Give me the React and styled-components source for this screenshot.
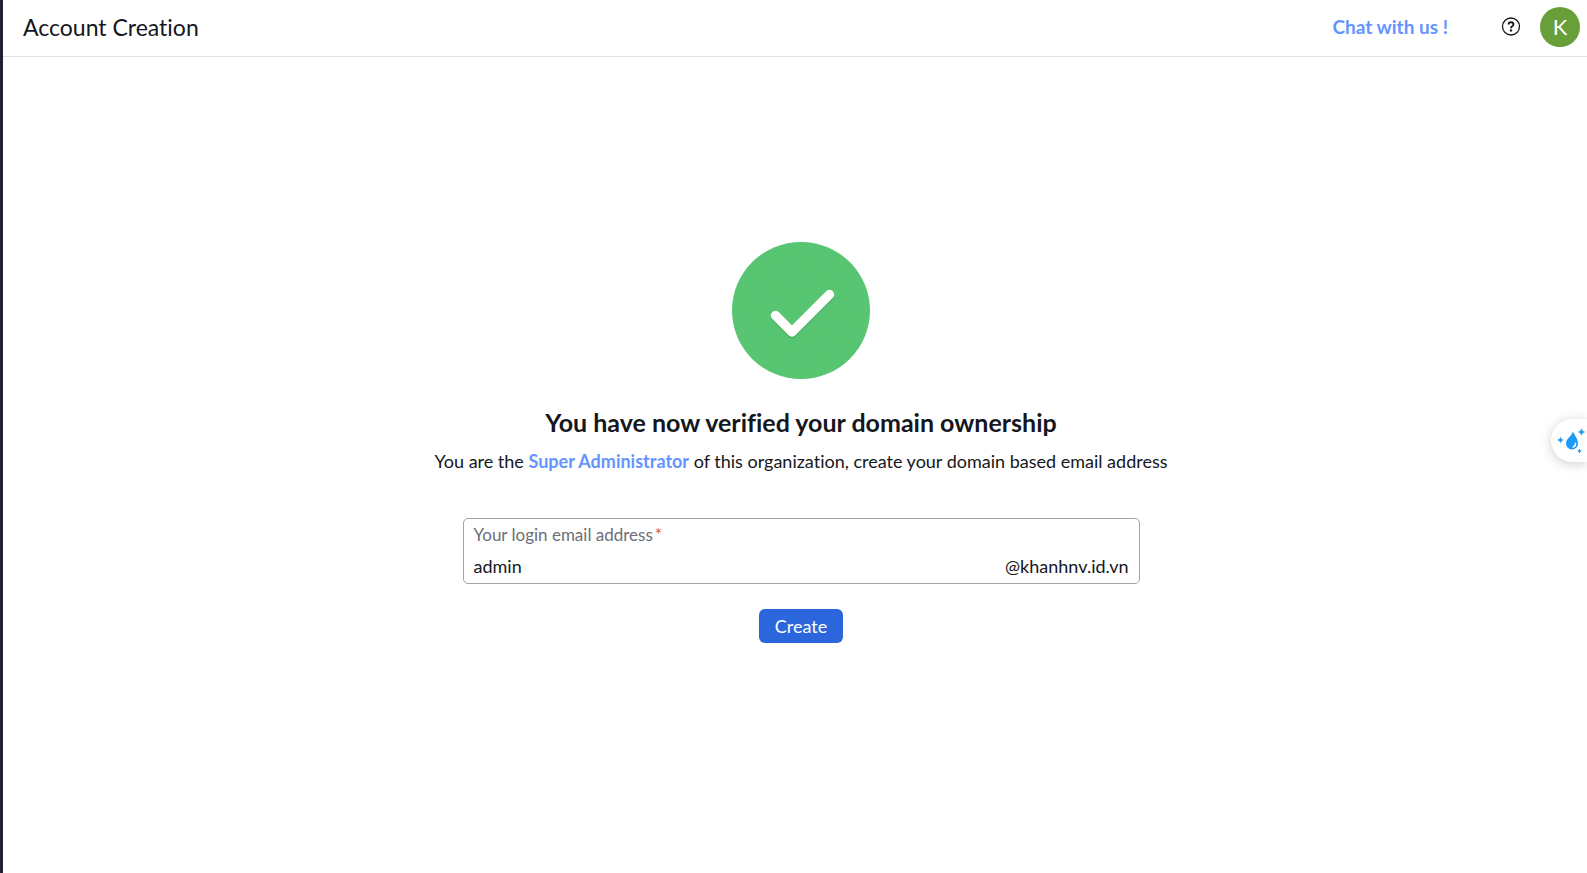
import React, { useState } from 'react';

import styled, { createGlobalStyle } from 'styled-components';

const GlobalStyle = createGlobalStyle`
  * {
    box-sizing: border-box;
  }

  body {
    margin: 0;
    background: #fff;
    color: #15171c;
    font-family: Lato, "Open Sans", sans-serif;
    font-size: 18px;
    font-variant-ligatures: none;
    line-height: 24px;
  }

  button,
  input {
    font: inherit;
  }
`;

const Page = styled.div`
  min-height: 100vh;
  display: flex;
  flex-direction: column;
  border-left: 3px solid #1d2130;
`;

const Header = styled.header`
  height: 57px;
  display: flex;
  align-items: center;
  padding: 0 7px 3px 20px;
  border-bottom: 1px solid #e2e2e4;
`;

const PageTitle = styled.h1`
  flex: 1;
  margin: 0;
  font-size: 23px;
  font-weight: 400;
`;

const BlueLink = styled.a`
  color: #6494ff;
  font-size: ${({ $size }) => $size || '18px'};
  font-weight: 700;
  text-decoration: none;
`;

const IconButton = styled.button`
  display: flex;
  margin: 0 19px 0 53px;
  padding: 0;
  border: 0;
  background: none;
  color: #15171c;
  cursor: pointer;
`;

const Avatar = styled.button`
  width: 40px;
  height: 40px;
  padding: 0;
  border: 0;
  border-radius: 50%;
  background: #689f38;
  color: #fff;
  font-size: 22px;
  cursor: pointer;
`;

const Main = styled.main`
  flex: 1;
  display: flex;
  flex-direction: column;
  align-items: center;
  padding: 185px 0 40px 12px;
`;

const Heading = styled.h2`
  margin: 27px 0 0;
  font-size: 25px;
  font-weight: 700;
  line-height: 32px;
`;

const Description = styled.p`
  margin: 11px 0 0;
`;

const Form = styled.form`
  width: 100%;
  display: flex;
  flex-direction: column;
  align-items: center;
  gap: 25px;
  margin-top: 45px;
`;

const Field = styled.div`
  width: 100%;
  max-width: 677px;
  padding: 4px 10px 5px;
  border: 1px solid #a0a3ab;
  border-radius: 5px;
`;

const FieldLabel = styled.label`
  display: block;
  color: #6b6f78;
  font-size: 17px;
`;

const Required = styled.span`
  margin-left: 2px;
  color: #d0602a;
`;

const FieldRow = styled.div`
  display: flex;
  align-items: center;
  margin-top: 7px;
`;

const EmailInput = styled.input`
  flex: 1;
  min-width: 0;
  height: 24px;
  padding: 0;
  border: 0;
  outline: 0;
  background: none;
  color: #15171c;
`;

const CreateButton = styled.button`
  height: 34px;
  padding: 0 16px;
  border: 0;
  border-radius: 6px;
  background: #2c66dd;
  color: #fff;
  cursor: pointer;
`;

const FloatingWidget = styled.button`
  position: fixed;
  top: 419px;
  right: 0;
  width: 36px;
  height: 43px;
  display: flex;
  align-items: center;
  padding: 0 0 0 6px;
  border: 0;
  border-radius: 22px 0 0 22px;
  background: #fff;
  box-shadow: 0 2px 12px rgba(0, 0, 0, 0.2);
  cursor: pointer;
`;

const HelpIcon = () => (
  <svg width="20" height="20" viewBox="0 0 20 20" fill="none" stroke="currentColor" aria-hidden="true">
    <circle cx="10" cy="9.5" r="8.5" strokeWidth="1.3" />
    <path d="M7.6 7.6C7.6 6.1 8.600 5.300 10 5.300C11.400 5.300 12.400 6.100 12.400 7.400C12.400 9.100 10 9.200 10 11.200" strokeWidth="1.9" />
    <circle cx="10" cy="13.400" r="1.200" fill="currentColor" stroke="none" />
  </svg>
);

const SuccessIcon = () => (
  <svg width="138" height="137" viewBox="0 0 138 137" fill="none" aria-hidden="true">
    <defs>
      <pattern id="dots" width="9" height="9" patternUnits="userSpaceOnUse" patternTransform="rotate(12)">
        <circle cx="2" cy="2" r="0.6" fill="#48b264" />
        <circle cx="6.5" cy="6.5" r="0.6" fill="#48b264" />
      </pattern>
    </defs>
    <ellipse cx="69" cy="68.5" rx="69" ry="68.5" fill="#57c571" />
    <circle cx="69" cy="68.5" r="60" fill="url(#dots)" />
    <path d="M43.5 75L60 91.5L97.5 54" stroke="#4baf64" strokeWidth="9.5" strokeLinecap="round" strokeLinejoin="round" />
    <path d="M43.5 73.5L60 90L97.5 52.5" stroke="#fff" strokeWidth="9.5" strokeLinecap="round" strokeLinejoin="round" />
  </svg>
);

const DropIcon = () => (
  <svg width="30" height="28" viewBox="0 0 30 28" fill="#1b9af7" aria-hidden="true">
    <path d="M16 4.5C17.5 8.5 21 11.5 21 16.5A6 6 0 0 1 9 16.5C9 11.5 14.5 9.5 16 4.5Z" />
    <path d="M18.6 16.2C18.6 18.4 17.6 19.6 16 20.1" fill="none" stroke="#fff" strokeWidth="1.4" strokeLinecap="round" />
    <path d="M3.5 9.5Q4 12.5 7 13Q4 13.5 3.5 16.5Q3 13.5 0 13Q3 12.5 3.5 9.5Z" />
    <path d="M24.500 1Q25 4.500 28.500 5Q25 5.500 24.500 9Q24 5.500 20.500 5Q24 4.500 24.500 1Z" />
    <path d="M22.5 21.5Q22.9 23.6 25 24Q22.9 24.4 22.5 26.5Q22.1 24.4 20 24Q22.1 23.6 22.5 21.5Z" />
  </svg>
);

const App = () => {
  const [login, setLogin] = useState('admin');

  return (
    <Page>
      <GlobalStyle />
      <Header>
        <PageTitle>Account Creation</PageTitle>
        <BlueLink href="#chat" $size="19px">Chat with us !</BlueLink>
        <IconButton type="button" aria-label="Help">
          <HelpIcon />
        </IconButton>
        <Avatar type="button">K</Avatar>
      </Header>
      <Main>
        <SuccessIcon />
        <Heading>You have now verified your domain ownership</Heading>
        <Description>
          You are the <BlueLink href="#super-admin">Super Administrator</BlueLink> of this organization, create your domain based email address
        </Description>
        <Form onSubmit={(e) => e.preventDefault()}>
          <Field>
            <FieldLabel htmlFor="login-email">
              Your login email address
              <Required>*</Required>
            </FieldLabel>
            <FieldRow>
              <EmailInput id="login-email" value={login} onChange={(e) => setLogin(e.target.value)} />
              <span>@khanhnv.id.vn</span>
            </FieldRow>
          </Field>
          <CreateButton type="submit">Create</CreateButton>
        </Form>
      </Main>
      <FloatingWidget type="button" aria-label="Assistant">
        <DropIcon />
      </FloatingWidget>
    </Page>
  );
};

export default App;
